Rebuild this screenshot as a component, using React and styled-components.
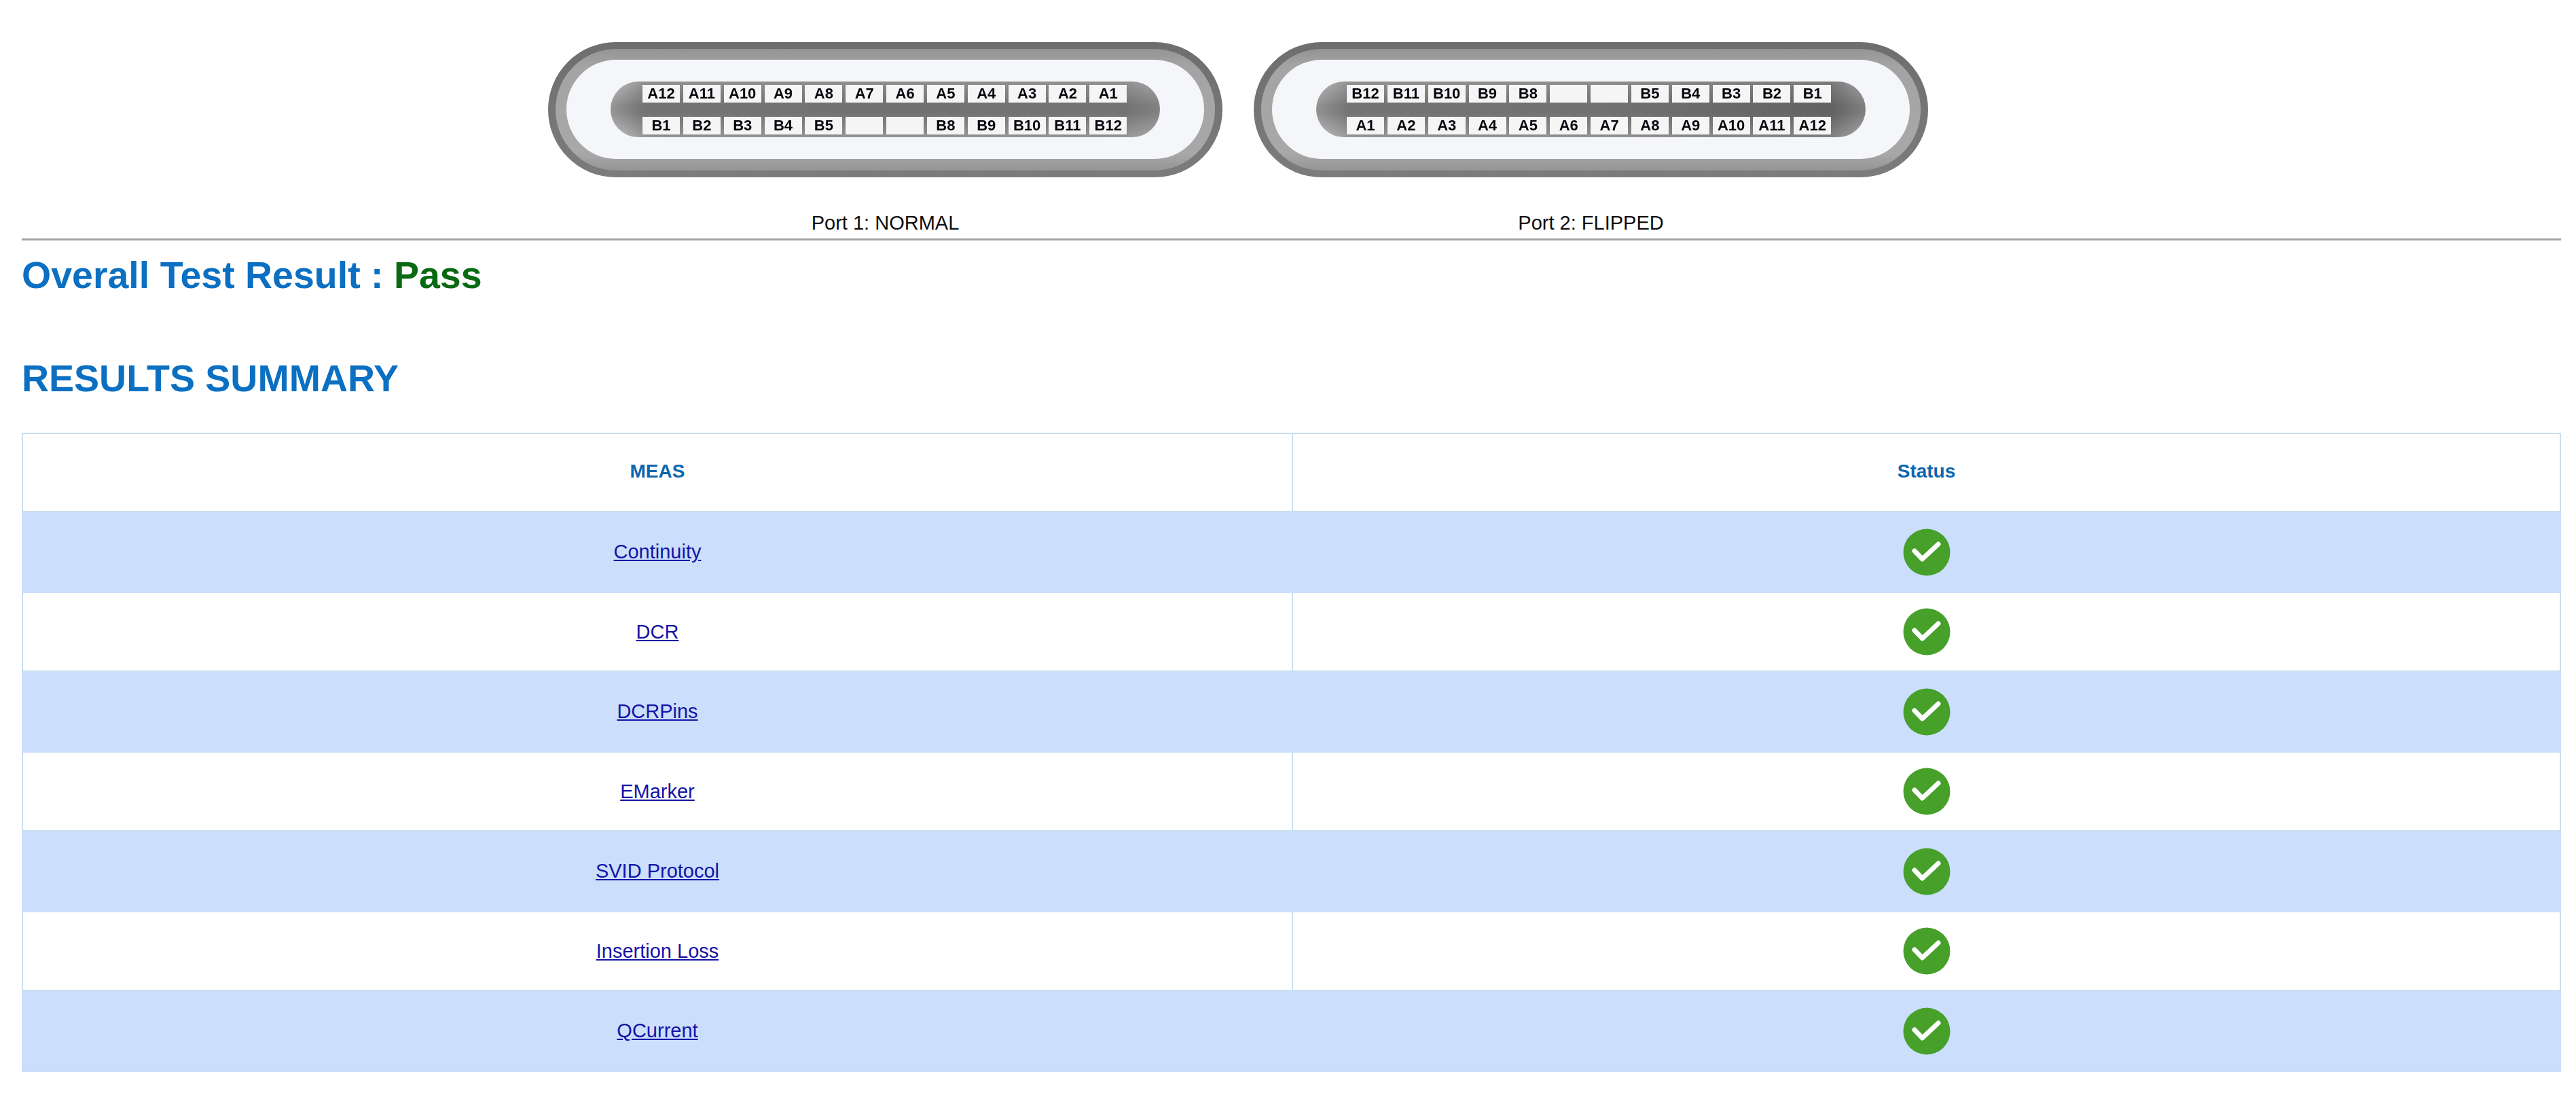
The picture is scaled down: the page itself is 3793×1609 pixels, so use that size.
import React from "react";
import styled, { createGlobalStyle } from "styled-components";

const Global = createGlobalStyle`
  html, body { margin: 0; padding: 0; background: #fff; }
  body { font-family: "Liberation Sans", Arial, sans-serif; color: #111; }
`;

const Page = styled.div`
  padding: 62px 22px 32px 32px;
`;
const PortRow = styled.div`
  display: flex;
  gap: 46px;
  padding-left: 775px;
`;
const Port = styled.figure`
  margin: 0;
  width: 993px;
`;
const Shell = styled.div`
  height: 199px;
  box-sizing: border-box;
  padding: 10px 11px;
  border-radius: 100px;
  background: linear-gradient(180deg, #6e6e6e 0%, #7c7c7c 100%);
  filter: blur(0.5px);
`;
const Ring = styled.div`
  height: 100%;
  box-sizing: border-box;
  padding: 16px 16px 17px;
  border-radius: 90px;
  background: linear-gradient(180deg, #949494 0%, #a4a4a4 14%, #a8a8a8 86%, #959595 100%);
`;
const Face = styled.div`
  height: 100%;
  box-sizing: border-box;
  padding: 32px 65px 31px;
  border-radius: 73px;
  background: #f5f6f9;
`;
const Socket = styled.div`
  height: 82px;
  box-sizing: border-box;
  padding: 5px 0 4px ${p => (p.$flipped ? 45 : 47)}px;
  display: flex;
  flex-direction: column;
  justify-content: space-between;
  border-radius: 41px;
  background:
    linear-gradient(180deg, rgba(170,170,170,.12) 0%, rgba(70,70,70,.38) 44%, rgba(70,70,70,.38) 56%, rgba(190,190,190,.2) 100%),
    linear-gradient(90deg, ${p => (p.$flipped ? "#c0c0c0" : "#c6c6c6")} 0%, #8f8f8f 6%, #8c8c8c 50%,
      ${p => (p.$flipped ? "#747474" : "#8f8f8f")} 94%, ${p => (p.$flipped ? "#a4a4a4" : "#a6a6a6")} 100%);
`;
const PinRow = styled.div`
  display: grid;
  grid-template-columns: repeat(12, 55px);
  column-gap: 4.85px;
`;
const Pin = styled.span`
  height: 26px;
  display: flex;
  align-items: center;
  justify-content: center;
  background: #f5f5f6;
  box-shadow: 0 1px 2px rgba(90, 90, 90, 0.35);
  font-size: 22px;
  font-weight: 700;
  line-height: 26px;
  color: #05050c;
`;
const PortLabel = styled.figcaption`
  margin-top: 51px;
  text-align: center;
  font-size: 29px;
  line-height: 32px;
  color: #0d0d0d;
`;
const Rule = styled.hr`
  margin: 7px 0 0;
  height: 3px;
  border: 0;
  background: #a3a3a3;
`;
const Heading = styled.h2`
  margin: ${p => p.$top}px 0 0;
  font-size: 55.5px;
  font-weight: 700;
  line-height: 64px;
  color: #0b6fc2;
`;
const Pass = styled.span`
  color: #0a6a12;
`;
const Table = styled.table`
  margin-top: 48px;
  width: 3739px;
  table-layout: fixed;
  border-collapse: collapse;
`;
const HeadCell = styled.th`
  box-sizing: border-box;
  height: 115px;
  padding: 0 0 4px;
  border: 2px solid #c9dff0;
  font-size: 28px;
  font-weight: 700;
  text-align: center;
  color: #0b66b0;
`;
const Row = styled.tr`
  height: ${p => (p.$blue ? 119 : 116)}px;
  background: ${p => (p.$blue ? "#cbdffd" : "#fff")};
`;
const Cell = styled.td`
  padding: 0;
  border: 2px solid ${p => (p.$blue ? "#cbdffd" : "#c9dff0")};
  text-align: center;
`;
const MeasLink = styled.a`
  font-size: 29px;
  color: #1414a6;
  text-decoration: underline;
`;
const StatusIcon = styled.svg`
  display: block;
  width: 70px;
  height: 70px;
  margin: 0 auto;
`;

const seq = (prefix, nums) => nums.map(n => (n ? `${prefix}${n}` : ""));
const desc = [12, 11, 10, 9, 8, 7, 6, 5, 4, 3, 2, 1];
const asc = [1, 2, 3, 4, 5, 6, 7, 8, 9, 10, 11, 12];

const ports = [
  {
    label: "Port 1: NORMAL",
    flipped: false,
    top: seq("A", desc),
    bottom: seq("B", [1, 2, 3, 4, 5, 0, 0, 8, 9, 10, 11, 12]),
  },
  {
    label: "Port 2: FLIPPED",
    flipped: true,
    top: seq("B", [12, 11, 10, 9, 8, 0, 0, 5, 4, 3, 2, 1]),
    bottom: seq("A", asc),
  },
];

const measurements = ["Continuity", "DCR", "DCRPins", "EMarker", "SVID Protocol", "Insertion Loss", "QCurrent"];

const Check = () => (
  <StatusIcon viewBox="0 0 70 70" aria-label="Pass">
    <circle cx="35" cy="35" r="34.5" fill="#46a02a" />
    <path d="M17 33 L28.5 45 L52 23" fill="none" stroke="#fff" strokeWidth="7" strokeLinecap="round" strokeLinejoin="round" />
  </StatusIcon>
);

export default function App() {
  return (
    <Page>
      <Global />
      <PortRow>
        {ports.map(port => (
          <Port key={port.label}>
            <Shell>
              <Ring>
                <Face>
                  <Socket $flipped={port.flipped}>
                    {[port.top, port.bottom].map((row, r) => (
                      <PinRow key={r}>
                        {row.map((pin, i) => (
                          <Pin key={i}>{pin}</Pin>
                        ))}
                      </PinRow>
                    ))}
                  </Socket>
                </Face>
              </Ring>
            </Shell>
            <PortLabel>{port.label}</PortLabel>
          </Port>
        ))}
      </PortRow>
      <Rule />
      <Heading $top={19}>
        Overall Test Result : <Pass>Pass</Pass>
      </Heading>
      <Heading $top={88}>RESULTS SUMMARY</Heading>
      <Table>
        <colgroup>
          <col width="1870" />
          <col />
        </colgroup>
        <thead>
          <tr>
            <HeadCell>MEAS</HeadCell>
            <HeadCell>Status</HeadCell>
          </tr>
        </thead>
        <tbody>
          {measurements.map((name, i) => {
            const blue = i % 2 === 0;
            return (
              <Row key={name} $blue={blue}>
                <Cell $blue={blue}>
                  <MeasLink href="#">{name}</MeasLink>
                </Cell>
                <Cell $blue={blue}>
                  <Check />
                </Cell>
              </Row>
            );
          })}
        </tbody>
      </Table>
    </Page>
  );
}
